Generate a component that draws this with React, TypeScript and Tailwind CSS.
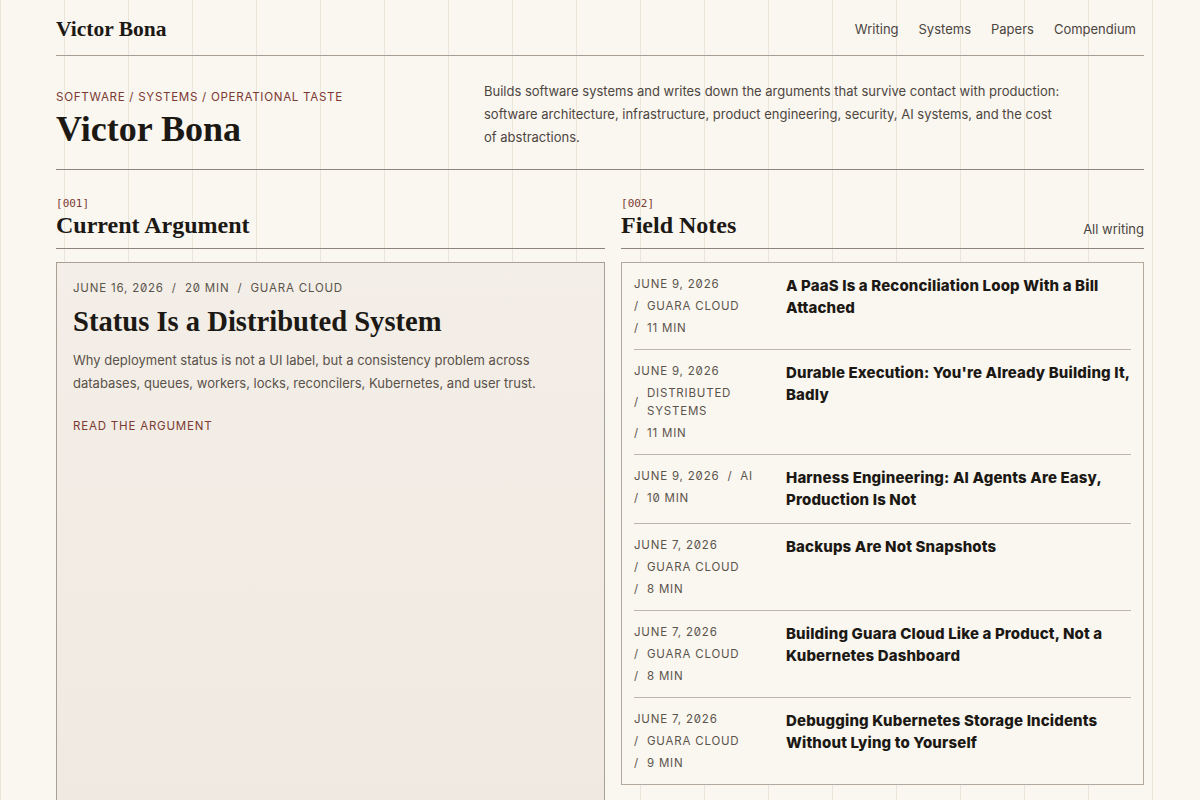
const notes = [
  { date: "June 9, 2026", tag: "Guara Cloud", read: "11 min", title: "A PaaS Is a Reconciliation Loop With a Bill Attached" },
  { date: "June 9, 2026", tag: "Distributed Systems", read: "11 min", title: "Durable Execution: You're Already Building It, Badly" },
  { date: "June 9, 2026", tag: "AI", read: "10 min", title: "Harness Engineering: AI Agents Are Easy, Production Is Not" },
  { date: "June 7, 2026", tag: "Guara Cloud", read: "8 min", title: "Backups Are Not Snapshots" },
  { date: "June 7, 2026", tag: "Guara Cloud", read: "8 min", title: "Building Guara Cloud Like a Product, Not a Kubernetes Dashboard" },
  { date: "June 7, 2026", tag: "Guara Cloud", read: "9 min", title: "Debugging Kubernetes Storage Incidents Without Lying to Yourself" },
];

const serif = "font-['Liberation_Serif',serif]";
const sans = "font-['Inter',sans-serif]";

function SectionHead({ num, title, aside }: { num: string; title: string; aside?: string }) {
  return (
    <div className="flex items-end justify-between border-b border-[#8c847a] pb-2">
      <div>
        <div className="font-['DejaVu_Sans_Mono',monospace] text-[11px] leading-[14px] text-[#7b3a32] slashed-zero">
          [{num}]
        </div>
        <h2 className={`${serif} -mt-px text-[24px] leading-[30px] font-bold text-[#1c1915]`}>{title}</h2>
      </div>
      {aside && <a className="pb-[3px] text-[13px] leading-4 text-[#4a453f]">{aside}</a>}
    </div>
  );
}

export default function App() {
  return (
    <div
      className={`${sans} min-h-screen bg-[#faf6f0] bg-[linear-gradient(90deg,#ece5da_1px,transparent_1px)] bg-[length:64px_64px] text-[#1c1915]`}
    >
      <div className="mx-auto w-[1088px]">
        {/* header */}
        <header className="flex h-14 items-center justify-between border-b border-[#a79f94] pt-1">
          <div className={`${serif} text-[21.5px] font-bold`}>Victor Bona</div>
          <nav className="flex gap-5 pr-2 text-[13px] text-[#4a453f]">
            <a>Writing</a>
            <a>Systems</a>
            <a>Papers</a>
            <a>Compendium</a>
          </nav>
        </header>

        {/* hero */}
        <section className="flex items-end border-b border-[#8c847a] pt-6 pb-[20px]">
          <div className="w-[428px]">
            <div className="text-[11.6px] leading-4 tracking-[0.06em] text-[#7b3a32] uppercase">
              Software / Systems / Operational Taste
            </div>
            <h1 className={`${serif} mt-[4px] text-[36px] leading-10 font-bold`}>Victor Bona</h1>
          </div>
          <p className="w-[580px] text-[13px] leading-[23px] text-[#4d4640]">
            Builds software systems and writes down the arguments that survive contact with production:
            software architecture, infrastructure, product engineering, security, AI systems, and the cost
            of abstractions.
          </p>
        </section>

        {/* columns */}
        <div className="grid grid-cols-[549px_1fr] gap-4 pt-[27px]">
          <section>
            <SectionHead num="001" title="Current Argument" />
            <article className="mt-[13px] h-[560px] border border-[#a8a095] bg-[linear-gradient(180deg,#f3eee7,#efe9e1)] px-4 pt-[17px]">
              <div className="text-[11.5px] leading-4 tracking-[0.07em] text-[#5b544c] uppercase slashed-zero">
                June 16, 2026 &nbsp;/&nbsp; 20 min &nbsp;/&nbsp; Guara Cloud
              </div>
              <h3 className={`${serif} mt-[9px] text-[28.6px] leading-[34px] font-bold`}>
                Status Is a Distributed System
              </h3>
              <p className="mt-[10px] w-[470px] text-[13px] leading-[23px] text-[#5a524a]">
                Why deployment status is not a UI label, but a consistency problem across databases, queues,
                workers, locks, reconcilers, Kubernetes, and user trust.
              </p>
              <a className="mt-[23px] block text-[11.5px] leading-4 tracking-[0.07em] text-[#7b3a32] uppercase">
                Read the argument
              </a>
            </article>
          </section>

          <section>
            <SectionHead num="002" title="Field Notes" aside="All writing" />
            <div className="mt-[13px] border border-[#b2aa9f] bg-[#faf6f0] px-3">
              {notes.map((n, i) => (
                <div
                  key={i}
                  className={`grid grid-cols-[140px_1fr] gap-x-3 py-3 ${i > 0 ? "border-t border-[#bdb5aa]" : ""}`}
                >
                  <div className="flex flex-wrap content-start gap-x-2 gap-y-1 text-[11.5px] leading-[18px] tracking-[0.07em] text-[#5b544c] uppercase slashed-zero">
                    <span>{n.date}</span>
                    <span className="flex items-center gap-2">
                      <span>/</span>
                      <span>{n.tag}</span>
                    </span>
                    <span className="flex items-center gap-2">
                      <span>/</span>
                      <span>{n.read}</span>
                    </span>
                  </div>
                  <h4 className="text-[15px] leading-[22px] font-extrabold tracking-[0.01em] text-[#1c1915]">
                    {n.title}
                  </h4>
                </div>
              ))}
            </div>
          </section>
        </div>
      </div>
    </div>
  );
}
